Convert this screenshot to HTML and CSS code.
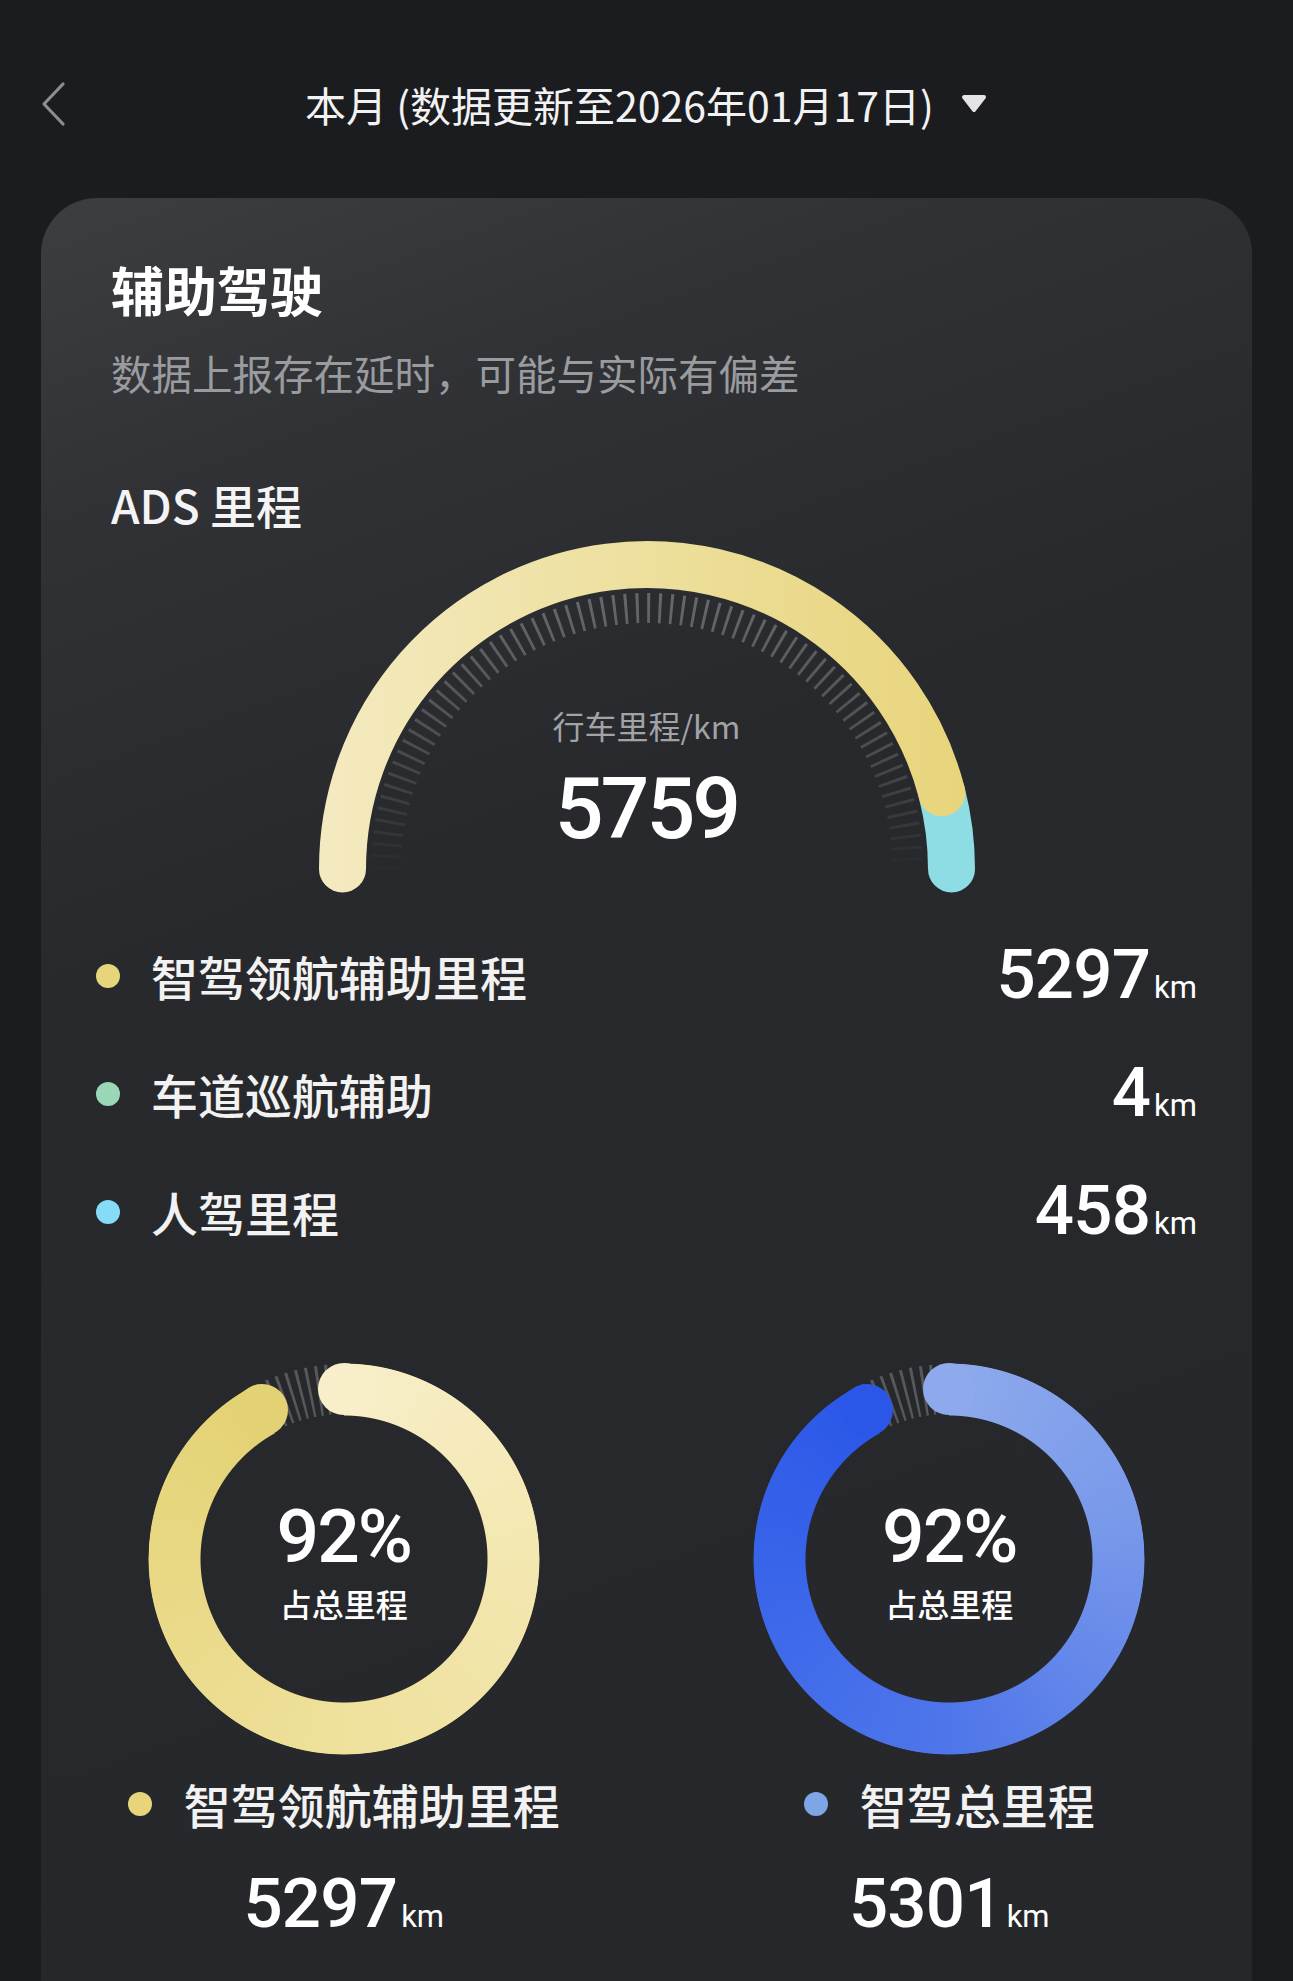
FILE: index.html
```html
<!DOCTYPE html>
<html lang="zh-CN">
<head>
<meta charset="utf-8">
<title>辅助驾驶</title>
<link rel="stylesheet" href="styles.css">
</head>
<body>
<div class="page">
  <header class="topbar">
    <div class="back">
      <svg width="28" height="48" viewBox="0 0 28 48"><path d="M23 4 L4 24 L23 44" fill="none" stroke="#8d8e91" stroke-width="3.2" stroke-linecap="round" stroke-linejoin="round"/></svg>
    </div>
    <div class="period">
      <span class="period-text">本月 (数据更新至2026年01月17日)</span>
      <svg class="caret" width="28" height="20" viewBox="0 0 28 20"><path d="M4 3 L24 3 L14 16 Z" fill="#e4e4e5" stroke="#e4e4e5" stroke-width="4" stroke-linejoin="round"/></svg>
    </div>
    <div></div>
  </header>

  <section class="card">
    <h1 class="card-title">辅助驾驶</h1>
    <p class="card-sub">数据上报存在延时，可能与实际有偏差</p>
    <h2 class="section-title">ADS 里程</h2>

    <div class="gauge">
      <svg class="gauge-svg" width="660" height="352" viewBox="0 0 660 352">
        <defs>
          <linearGradient id="gy" x1="0" y1="0" x2="660" y2="0" gradientUnits="userSpaceOnUse">
            <stop offset="0" stop-color="#f4eac0"/>
            <stop offset="1" stop-color="#e7d47a"/>
          </linearGradient>
          <linearGradient id="gt" x1="0" y1="60" x2="0" y2="330" gradientUnits="userSpaceOnUse">
            <stop offset="0" stop-color="#66676b"/>
            <stop offset="0.55" stop-color="#4b4c50"/>
            <stop offset="1" stop-color="#292a2e"/>
          </linearGradient>
        </defs>
        <path d="M69 328 A261 261 0 0 1 591 328" fill="none" stroke="url(#gt)" stroke-width="30" stroke-dasharray="2.9 8.49"/>
        <path d="M624.8 251.8 A304.5 304.5 0 0 1 634.5 328" fill="none" stroke="#8fdde4" stroke-width="47" stroke-linecap="round"/>
        <path d="M25.5 328 A304.5 304.5 0 0 1 624.8 251.8" fill="none" stroke="url(#gy)" stroke-width="47" stroke-linecap="round"/>
      </svg>
      <div class="gauge-text">
        <div class="gauge-label">行车里程/km</div>
        <div class="gauge-value">5759</div>
      </div>
    </div>

    <ul class="legend">
      <li class="legend-row">
        <span class="dot dot-yellow"></span>
        <span class="legend-label">智驾领航辅助里程</span>
        <span class="legend-value"><span class="num">5297</span><span class="unit">km</span></span>
      </li>
      <li class="legend-row">
        <span class="dot dot-green"></span>
        <span class="legend-label">车道巡航辅助</span>
        <span class="legend-value"><span class="num">4</span><span class="unit">km</span></span>
      </li>
      <li class="legend-row">
        <span class="dot dot-cyan"></span>
        <span class="legend-label">人驾里程</span>
        <span class="legend-value"><span class="num">458</span><span class="unit">km</span></span>
      </li>
    </ul>

    <div class="donuts">
      <div class="donut-col">
        <div class="donut">
          <svg class="donut-ticks" width="392" height="392" viewBox="0 0 392 392"><circle cx="196" cy="196" r="170" fill="none" stroke="#57585c" stroke-width="50" stroke-dasharray="2.7 6.2012"/></svg>
          <div class="ring ring-yellow"></div>
          <span class="cap cap-start cap-yellow-start"></span>
          <span class="cap cap-end cap-yellow-end"></span>
          <div class="donut-center">
            <div class="pct">92%</div>
            <div class="pct-label">占总里程</div>
          </div>
        </div>
        <div class="donut-legend"><span class="dot dot-yellow"></span><span class="donut-legend-text">智驾领航辅助里程</span></div>
        <div class="donut-value"><span class="num">5297</span><span class="unit">km</span></div>
      </div>
      <div class="donut-col">
        <div class="donut">
          <svg class="donut-ticks" width="392" height="392" viewBox="0 0 392 392"><circle cx="196" cy="196" r="170" fill="none" stroke="#57585c" stroke-width="50" stroke-dasharray="2.7 6.2012"/></svg>
          <div class="ring ring-blue"></div>
          <span class="cap cap-start cap-blue-start"></span>
          <span class="cap cap-end cap-blue-end"></span>
          <div class="donut-center">
            <div class="pct">92%</div>
            <div class="pct-label">占总里程</div>
          </div>
        </div>
        <div class="donut-legend"><span class="dot dot-blue"></span><span class="donut-legend-text">智驾总里程</span></div>
        <div class="donut-value"><span class="num">5301</span><span class="unit">km</span></div>
      </div>
    </div>
  </section>
</div>
</body>
</html>
```
FILE: styles.css
```css
* { box-sizing: border-box; }
html, body { margin: 0; padding: 0; }
body {
  background: #1b1c20;
  color: #ffffff;
  font-family: "Noto Sans CJK SC", "Noto Sans", sans-serif;
}
.page {
  width: 1293px;
  height: 1981px;
  overflow: hidden;
}

/* top bar */
.topbar {
  display: grid;
  grid-template-columns: 1fr auto 1fr;
  align-items: center;
  padding-top: 54px;
  height: 154px;
}
.topbar > * { height: 100px; display: flex; align-items: center; }
.back { padding-left: 40px; }
.back svg { display: block; }
.period { display: flex; align-items: center; }
.period-text {
  font-size: 41px;
  line-height: 48px;
  color: #f2f2f2;
  font-weight: 400;
}
.caret { display: block; margin-left: 26px; }

/* card */
.card {
  margin: 44px 41px 0;
  border-radius: 56px 56px 0 0;
  background: linear-gradient(160deg, #3c3e42 0%, #303236 14%, #28292d 34%, #26272b 100%);
  padding: 60px 0 120px;
  min-height: 1800px;
}
.card-title {
  margin: 0 0 0 70px;
  font-size: 53px;
  line-height: 62px;
  font-weight: 700;
  color: #ffffff;
}
.card-sub {
  margin: 29px 0 0 70px;
  font-size: 40.5px;
  line-height: 48px;
  color: #9a9b9f;
  font-weight: 400;
}
.section-title {
  margin: 81px 0 0 70px;
  font-size: 46px;
  line-height: 52px;
  font-weight: 500;
  color: #f4f4f4;
}

/* gauge */
.gauge {
  position: relative;
  width: 660px;
  height: 352px;
  margin: 11px auto 0;
}
.gauge-svg { position: absolute; left: 0; top: 0; display: block; }
.gauge-text {
  position: relative;
  padding-top: 164px;
  text-align: center;
}
.gauge-label {
  font-size: 32px;
  line-height: 40px;
  color: #a2a3a7;
}
.gauge-value {
  margin-top: 21px;
  font-family: Roboto, "Noto Sans", sans-serif;
  font-weight: 500;
  font-size: 86px;
  line-height: 86px;
  letter-spacing: -3px;
  color: #ffffff;
}

/* legend */
.legend {
  list-style: none;
  margin: 24px 0 0;
  padding: 0 55px;
}
.legend-row {
  display: flex;
  align-items: center;
  height: 118px;
}
.dot {
  display: inline-block;
  width: 24px;
  height: 24px;
  border-radius: 50%;
  flex: none;
}
.dot-yellow { background: #e7d57b; }
.dot-green { background: #9ad7b7; }
.dot-cyan { background: #86dcf7; }
.dot-blue { background: #7ea6e6; }
.legend-label {
  margin-left: 31px;
  font-size: 47px;
  line-height: 56px;
  font-weight: 500;
  color: #f2f2f2;
}
.legend-value {
  margin-left: auto;
  padding-top: 14px;
  line-height: 80px;
  white-space: nowrap;
}
.num {
  font-family: Roboto, "Noto Sans", sans-serif;
  font-weight: 500;
  font-size: 69px;
  letter-spacing: -0.8px;
  color: #ffffff;
}
.unit {
  font-family: Roboto, "Noto Sans", sans-serif;
  font-weight: 400;
  font-size: 31px;
  margin-left: 4px;
  color: #ffffff;
}

/* donuts */
.donuts {
  display: grid;
  grid-template-columns: 1fr 1fr;
  margin-top: 92px;
}
.donut-col {
  display: flex;
  flex-direction: column;
  align-items: center;
}
.donut {
  position: relative;
  width: 392px;
  height: 392px;
}
.donut-ticks { position: absolute; left: 0; top: 0; display: block; }
.ring {
  position: absolute;
  inset: 0;
  border-radius: 50%;
  -webkit-mask: radial-gradient(closest-side, transparent 143px, #000 144px, #000 195px, transparent 196px);
  mask: radial-gradient(closest-side, transparent 143px, #000 144px, #000 195px, transparent 196px);
}
.ring-yellow {
  background: conic-gradient(from 0deg, #f8eec9 0deg, #f4e8b3 80deg, #efe09c 180deg, #e8d883 270deg, #e3d273 331.2deg, transparent 331.2deg);
}
.ring-blue {
  background: conic-gradient(from 0deg, #8eaaec 0deg, #7898ea 80deg, #4f76ea 180deg, #3864ea 270deg, #2b57e8 331.2deg, transparent 331.2deg);
}
.cap {
  position: absolute;
  width: 52px;
  height: 52px;
  border-radius: 50%;
}
.cap-start { left: 170px; top: 0; }
.cap-end { left: 88px; top: 21px; }
.cap-yellow-start { background: #f8eec9; }
.cap-yellow-end { background: #e3d273; }
.cap-blue-start { background: #8eaaec; }
.cap-blue-end { background: #2b57e8; }
.donut-center {
  position: absolute;
  inset: 0;
  display: flex;
  flex-direction: column;
  align-items: center;
  justify-content: center;
}
.pct {
  font-family: Roboto, "Noto Sans", sans-serif;
  font-weight: 500;
  font-size: 75px;
  line-height: 88px;
  letter-spacing: -2px;
  color: #ffffff;
}
.pct-label {
  font-size: 32px;
  line-height: 46px;
  font-weight: 500;
  color: #ffffff;
}
.donut-legend {
  margin-top: 21px;
  display: flex;
  align-items: center;
  height: 56px;
}
.donut-legend-text {
  margin-left: 32px;
  font-size: 47px;
  line-height: 56px;
  font-weight: 500;
  color: #f2f2f2;
}
.donut-value {
  margin-top: 32px;
  line-height: 80px;
  text-align: center;
  white-space: nowrap;
}
```
